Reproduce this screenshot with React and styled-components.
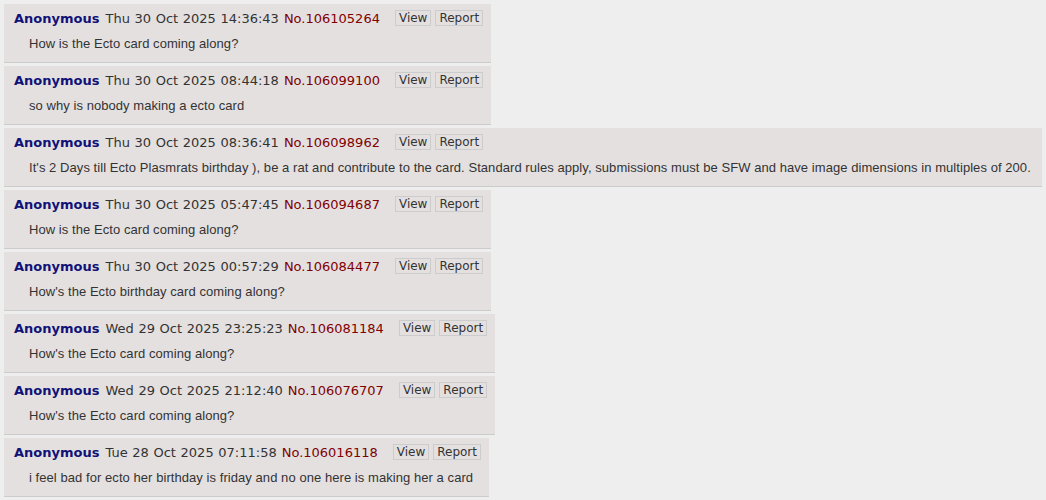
import React from "react";
import styled, { createGlobalStyle } from "styled-components";

const Global = createGlobalStyle`
  html, body { margin: 0; padding: 0; background: #eeeeee; }
  body { font-family: "DejaVu Sans", Verdana, sans-serif; }
`;

const List = styled.div`
  display: flex;
  flex-direction: column;
  align-items: flex-start;
  padding: 4px;
  gap: 3px;
`;

const Post = styled.div`
  background: #e4e0e0;
  border-bottom: 1px solid #cccccc;
  padding: 6px 8px 10px 10px;
  display: flex;
  flex-direction: column;
  gap: 10px;
`;

const Header = styled.div`
  display: flex;
  align-items: center;
  height: 16px;
  font-size: 13px;
  color: #333333;
  white-space: nowrap;
`;

const Name = styled.span`
  color: #111177;
  font-weight: bold;
`;

const DateText = styled.span`
  margin-left: 6px;
  word-spacing: 0.5px;
`;

const Num = styled.span`
  color: #800000;
  margin-left: 5px;
`;

const Buttons = styled.div`
  display: flex;
  gap: 4px;
  margin-left: 15px;
`;

const Btn = styled.span`
  display: inline-flex;
  align-items: center;
  height: 14px;
  padding: 0 3px;
  border: 1px solid #cccccc;
  font-size: 12px;
  color: #333333;
`;

const Message = styled.div`
  font-family: "Liberation Sans", Arial, sans-serif;
  font-size: 13px;
  line-height: 16px;
  color: #333333;
  letter-spacing: 0.06px;
  padding-left: 15px;
  padding-right: 3px;
  white-space: nowrap;
`;

const posts = [
  ["Thu 30 Oct 2025 14:36:43", "106105264", "How is the Ecto card coming along?"],
  ["Thu 30 Oct 2025 08:44:18", "106099100", "so why is nobody making a ecto card"],
  ["Thu 30 Oct 2025 08:36:41", "106098962", "It's 2 Days till Ecto Plasmrats birthday ), be a rat and contribute to the card. Standard rules apply, submissions must be SFW and have image dimensions in multiples of 200."],
  ["Thu 30 Oct 2025 05:47:45", "106094687", "How is the Ecto card coming along?"],
  ["Thu 30 Oct 2025 00:57:29", "106084477", "How's the Ecto birthday card coming along?"],
  ["Wed 29 Oct 2025 23:25:23", "106081184", "How's the Ecto card coming along?"],
  ["Wed 29 Oct 2025 21:12:40", "106076707", "How's the Ecto card coming along?"],
  ["Tue 28 Oct 2025 07:11:58", "106016118", "i feel bad for ecto her birthday is friday and no one here is making her a card"],
];

export default function App() {
  return (
    <>
      <Global />
      <List>
        {posts.map(([date, no, msg]) => (
          <Post key={no}>
            <Header>
              <Name>Anonymous</Name>
              <DateText>{date}</DateText>
              <Num>No.{no}</Num>
              <Buttons>
                <Btn>View</Btn>
                <Btn>Report</Btn>
              </Buttons>
            </Header>
            <Message>{msg}</Message>
          </Post>
        ))}
      </List>
    </>
  );
}
